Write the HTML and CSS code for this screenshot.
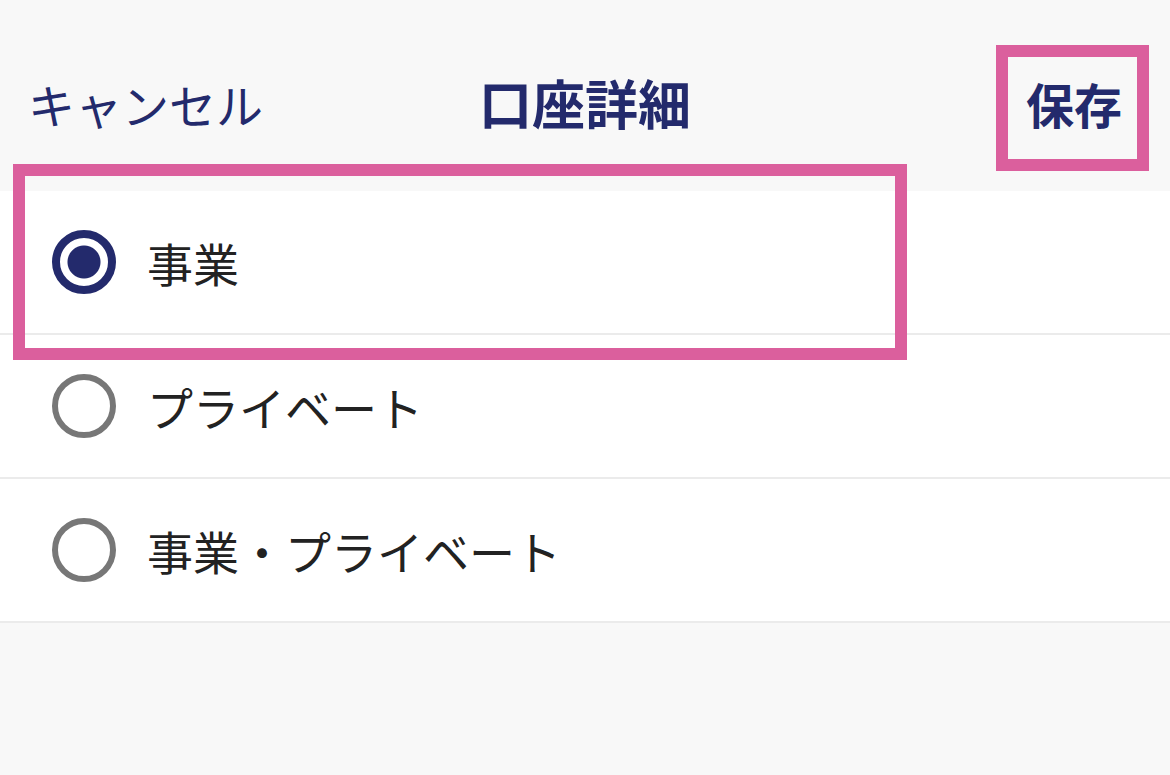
FILE: index.html
```html
<!DOCTYPE html>
<html lang="ja">
<head>
    <meta charset="UTF-8">
    <meta name="viewport" content="width=device-width, initial-scale=1.0">
    <title>口座詳細</title>
    <link rel="stylesheet" href="styles.css">
</head>
<body>
    <header class="nav">
        <a class="nav-cancel">キャンセル</a>
        <h1 class="nav-title">口座詳細</h1>
        <a class="nav-save">保存</a>
        <span class="mark mark-save"></span>
    </header>

    <ul class="options">
        <li class="option">
            <span class="radio checked"></span>
            <span class="label">事業</span>
        </li>
        <li class="option">
            <span class="radio"></span>
            <span class="label">プライベート</span>
        </li>
        <li class="option">
            <span class="radio"></span>
            <span class="label">事業・プライベート</span>
        </li>
        <span class="mark mark-first"></span>
    </ul>
</body>
</html>
```

FILE: styles.css
```css
body {
    margin: 0;
    width: 1170px;
    height: 775px;
    background: #f8f8f8;
    font-family: "Noto Sans CJK JP", "Noto Sans", sans-serif;
    overflow: hidden;
}
.nav {
    position: relative;
    display: grid;
    grid-template-columns: 1fr auto 1fr;
    align-items: center;
    height: 191px;
    padding: 0 28px;
    box-sizing: border-box;
    color: #232a6c;
}
.nav-cancel {
    font-size: 47px;
    line-height: 1;
    margin-top: 16px;
}
.nav-title {
    margin: 14px 0 0;
    font-size: 53px;
    font-weight: 700;
    line-height: 1;
}
.nav-save {
    justify-self: end;
    margin: 14px 20px 0 0;
    font-size: 48px;
    font-weight: 700;
    line-height: 1;
}
.options {
    position: relative;
    list-style: none;
    margin: 0;
    padding: 0;
    background: #fff;
}
.option {
    display: flex;
    align-items: center;
    gap: 31px;
    height: 142px;
    padding-left: 52px;
    border-bottom: 2px solid #ebebeb;
}
.radio {
    width: 64px;
    height: 64px;
    box-sizing: border-box;
    border-radius: 50%;
    border: 6px solid #777;
}
.radio.checked {
    border: 8px solid #232a6c;
    background: radial-gradient(circle, #232a6c 0 16px, #fff 17px);
}
.label {
    font-size: 46px;
    line-height: 1;
    color: #222;
}
/* highlight frames */
.mark {
    position: absolute;
    border: 12px solid #db5f9d;
    box-sizing: border-box;
}
.mark-save {
    left: 996px;
    top: 45px;
    width: 153px;
    height: 126px;
}
.mark-first {
    left: 13px;
    top: -27px;
    width: 894px;
    height: 196px;
}
```
